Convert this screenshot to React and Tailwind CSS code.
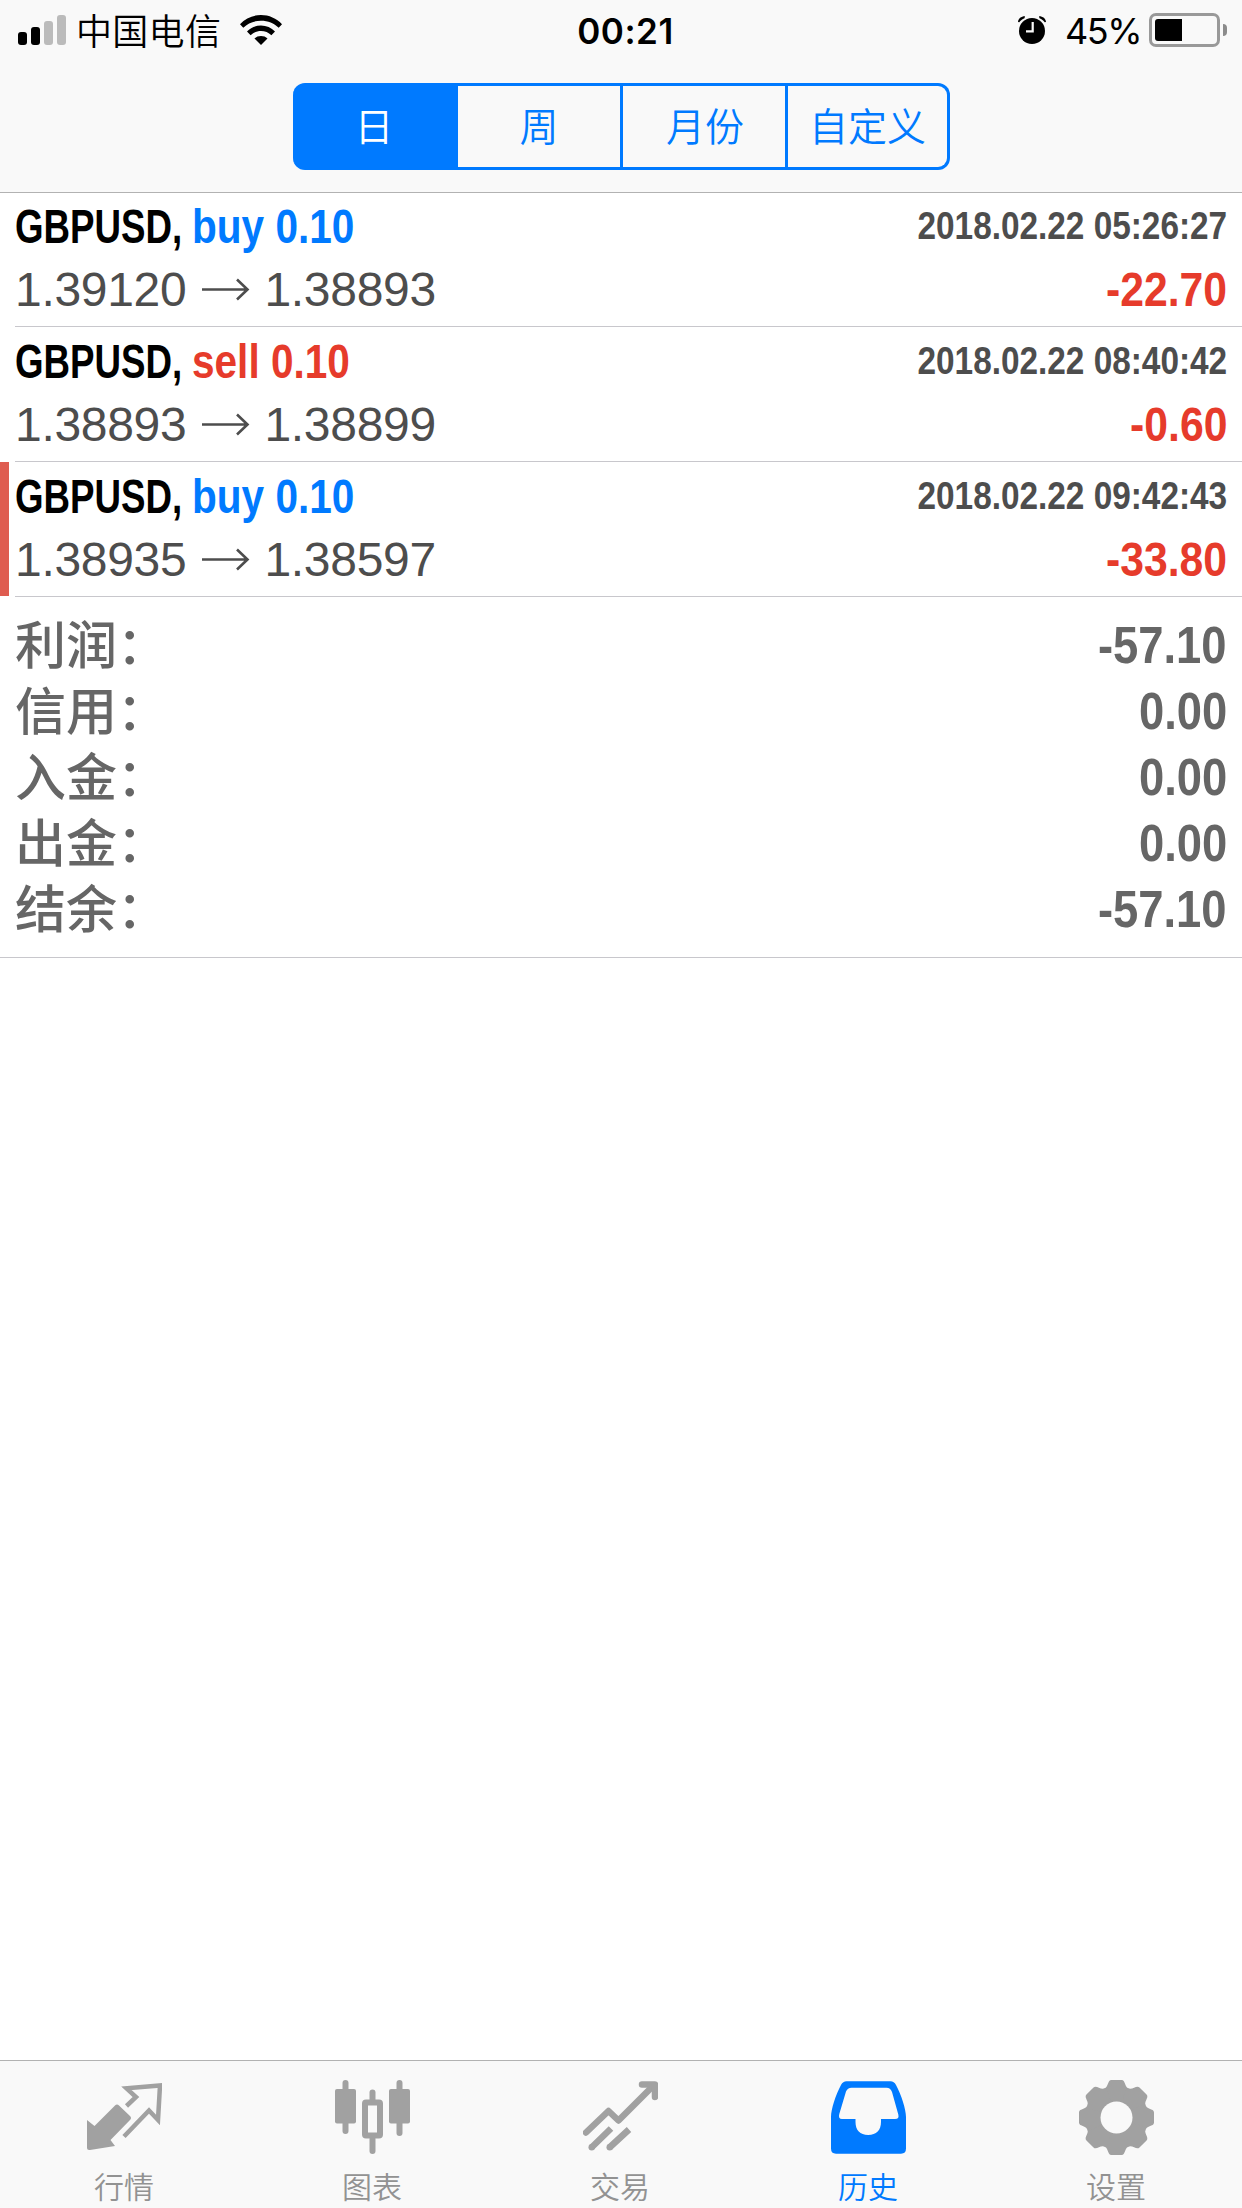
const trades = [
  { id: 1, side: 'buy', volume: '0.10', open: '1.39120', close: '1.38893', time: '2018.02.22 05:26:27', profit: '-22.70' },
  { id: 2, side: 'sell', volume: '0.10', open: '1.38893', close: '1.38899', time: '2018.02.22 08:40:42', profit: '-0.60' },
  { id: 3, side: 'buy', volume: '0.10', open: '1.38935', close: '1.38597', time: '2018.02.22 09:42:43', profit: '-33.80', marked: true },
]

const summary = [
  { label: '利润', value: '-57.10' },
  { label: '信用', value: '0.00' },
  { label: '入金', value: '0.00' },
  { label: '出金', value: '0.00' },
  { label: '结余', value: '-57.10' },
]

function SignalIcon() {
  return (
    <div className="flex items-end gap-1 h-[30px]">
      <span className="w-[9px] h-[13px] rounded-[3px] bg-black" />
      <span className="w-[9px] h-[18px] rounded-[3px] bg-black" />
      <span className="w-[9px] h-[24px] rounded-[3px] bg-[#bbbbbb]" />
      <span className="w-[9px] h-[30px] rounded-[3px] bg-[#bbbbbb]" />
    </div>
  )
}

function WifiIcon() {
  return (
    <svg width="42" height="30" viewBox="0 0 42 30">
      <path d="M0 9.2C5.5 3.3 13 0 21 0s15.500 3.300 21 9.200l-3.300 3.600C34 8.200 28 5.700 21 5.700S8 8.200 3.300 12.800z" />
      <path d="M7 16.500C10.700 12.600 15.600 10.500 21 10.500s10.300 2.100 14 6l-3.600 3.800C28.600 17.500 25 16 21 16s-7.600 1.500-10.400 4.300z" />
      <path d="M14.500 23.600C16.200 21.800 18.500 21 21 21s4.800.8 6.500 2.600L21 30z" />
    </svg>
  )
}

function AlarmIcon() {
  return (
    <svg width="28" height="28" viewBox="0 0 28 28">
      <circle cx="14" cy="15" r="13" />
      <path d="M0 6C.2 2.500 3 .2 7 .2L6.500 2.300C4.300 3.300 2.500 4.600 1.300 6.300z" />
      <path d="M28 6C27.800 2.500 25 .2 21 .2l.5 2.100c2.200 1 4 2.300 5.200 4z" />
      <path d="M14.700 6v9.300H8" fill="none" stroke="#f9f9f9" strokeWidth="2.200" />
    </svg>
  )
}

function BatteryIcon() {
  return (
    <div className="flex items-center gap-[3px]">
      <div className="w-[71px] h-[34px] rounded-[7px] border-[3px] border-[#999999] p-[3px]">
        <div className="w-[27px] h-[22px] rounded-l-[3px] bg-black" />
      </div>
      <div className="w-1 h-3 rounded-r-full bg-[#8c8c8c]" />
    </div>
  )
}

function StatusBar() {
  return (
    <div className="grid grid-cols-[1fr_auto_1fr] items-center h-[60px] px-[15px] text-[36px] leading-none">
      <div className="flex items-center pl-[3px]">
        <SignalIcon />
        <span className="ml-[10px] mr-[20px] w-[144px] whitespace-nowrap pt-[5px] font-[350] tracking-[0.3px]">中国电信</span>
        <WifiIcon />
      </div>
      <span className="pl-[9px] pt-[3px] font-['Inter'] text-[35px] font-semibold tracking-[0.5px]">00:21</span>
      <div className="flex items-center justify-end">
        <AlarmIcon />
        <span className="ml-[19px] mr-[8px] pt-[1px] font-['Inter'] tracking-[-1.5px]">45%</span>
        <BatteryIcon />
      </div>
    </div>
  )
}

function PeriodTabs() {
  const base = 'h-[87px] border-y-[3px] border-r-[3px] border-[#007aff] text-[39px] leading-none font-[350] pt-[1px]'
  return (
    <div className="ml-[293px] mt-[23px] flex w-[657px]">
      <button type="button" className={`${base} w-[165px] rounded-l-[12px] bg-[#007aff] text-white`}>日</button>
      <button type="button" className={`${base} w-[165px] text-[#007aff]`}>周</button>
      <button type="button" className={`${base} w-[165px] pl-[2px] text-[#007aff]`}>月份</button>
      <button type="button" className={`${base} w-[162px] rounded-r-[12px] text-[#007aff]`}>自定义</button>
    </div>
  )
}

function ArrowRight() {
  return (
    <svg className="ml-[16px] mr-[14px]" width="48" height="24" viewBox="0 0 48 24" fill="none" stroke="#4d4d4d" strokeWidth="2.600">
      <path d="M0 11.500H45M35 1.500l10.500 10L35 21.500" />
    </svg>
  )
}

function TradeRow({ trade }) {
  return (
    <div className="flex h-[135px]">
      <div className={trade.marked ? 'w-[9px] h-[134px] bg-[#df5c50]' : 'w-[9px]'} />
      <div className="ml-[6px] flex-1 border-b border-[#c8c7cc] pr-[15px] pt-[8px]">
        <div className="flex h-[54px] items-center justify-between font-bold leading-none">
          <div className="flex text-[48px]">
            <span className="w-[177px] origin-left scale-x-[0.765] whitespace-nowrap text-black">GBPUSD,</span>
            <span className={`origin-left scale-x-[0.845] whitespace-nowrap ${trade.side === 'buy' ? 'text-[#007aff]' : 'text-[#e63b2b]'}`}>
              {trade.side} {trade.volume}
            </span>
          </div>
          <span className="origin-right scale-x-[0.855] whitespace-nowrap pb-[3px] text-[39px] text-[#4d4d4d]">{trade.time}</span>
        </div>
        <div className="flex h-[72px] items-center justify-between text-[48px] leading-none">
          <div className="flex items-center tracking-[-0.3px] text-[#4d4d4d]">
            <span>{trade.open}</span>
            <ArrowRight />
            <span>{trade.close}</span>
          </div>
          <span className="origin-right scale-x-[0.89] font-bold text-[#e63b2b]">{trade.profit}</span>
        </div>
      </div>
    </div>
  )
}

function Summary() {
  return (
    <div className="h-[361px] border-b border-[#c8c7cc] px-[15px] pt-[15px] text-[#666666]">
      {summary.map((item) => (
        <div key={item.label} className="flex h-[66px] items-center justify-between leading-none">
          <span lang="zh-CN" className="pt-[3px] text-[51px] font-medium">{item.label}：</span>
          <span className="origin-right scale-x-[0.89] pt-[1px] text-[51px] font-bold">{item.value}</span>
        </div>
      ))}
    </div>
  )
}

function QuotesIcon() {
  return (
    <svg width="75" height="75" viewBox="0 0 75 75" fill="currentColor">
      <path d="M28 25.500q2-2 4 0L43 36q2 2 0 4L23.500 60l4.500 6-25 4q-3 .5-3-2V40l7.500 6z" />
      <path d="M39.500 26L49 17 39.500 8.300 73 5.500 71 40 62 30.500 37 56.500" fill="none" stroke="currentColor" strokeWidth="4.500" />
    </svg>
  )
}

function ChartIcon() {
  return (
    <svg width="75" height="75" viewBox="0 0 75 75" fill="currentColor">
      <rect x="7.500" y="0" width="6" height="54" rx="3" />
      <rect x="0" y="9" width="21" height="34.500" rx="2" />
      <rect x="34.500" y="9.500" width="6" height="14" rx="3" />
      <rect x="34.500" y="56" width="6" height="18" rx="3" />
      <rect x="30" y="22.500" width="15" height="33" rx="1" fill="none" stroke="currentColor" strokeWidth="6" />
      <rect x="61.500" y="0" width="6" height="56" rx="3" />
      <rect x="54" y="9" width="21" height="34.500" rx="2" />
    </svg>
  )
}

function TradeIcon() {
  return (
    <svg width="75" height="75" viewBox="0 0 75 75" fill="none" stroke="currentColor" strokeWidth="6.500" strokeLinejoin="round">
      <path d="M3 52.500L25.500 31l10 9.500L70 6" strokeLinecap="round" />
      <path d="M59 4.500H72V17" strokeLinecap="round" />
      <path d="M65 4L72 11V4z" fill="currentColor" strokeWidth="2" />
      <path d="M8.500 67.500L28 48.500M26.500 67.500L46 49.500" />
      <circle cx="8.700" cy="67.300" r="3.200" fill="currentColor" stroke="none" />
      <circle cx="26.700" cy="67.300" r="3.200" fill="currentColor" stroke="none" />
    </svg>
  )
}

function HistoryIcon() {
  return (
    <svg width="75" height="75" viewBox="0 0 75 75" fill="currentColor" fillRule="evenodd">
      <path d="M15.500 1.300H59.500Q63 1.300 65 5C70 14 75 29 75 37V68.500Q75 73.700 70 73.700H5Q0 73.700 0 68.500V37C0 29 5 14 10 5Q12 1.300 15.500 1.300ZM20.500 7.700Q16.500 7.700 15 11.500L8.300 34Q7 39 11 39H24.500V42C24.500 50 29 55 37.200 55S50 50 50 42V39H64Q68.500 39 67.300 34.500L61 12Q59.500 7.700 55.500 7.700Z" />
    </svg>
  )
}

function SettingsIcon() {
  return (
    <svg width="75" height="75" viewBox="-37.500 -37.500 75 75" fill="currentColor">
      <circle r="31" />
      {[0, 45, 90, 135, 180, 225, 270, 315].map((deg) => (
        <path key={deg} transform={`rotate(${deg})`} d="M-14 -28.500C-7.500 -29 -9.500 -37.500 -5 -37.500H5C9.500 -37.500 7.500 -29 14 -28.500L0 0Z" />
      ))}
      <circle r="16" fill="#f9f9f9" />
    </svg>
  )
}

const tabs = [
  { label: '行情', Icon: QuotesIcon },
  { label: '图表', Icon: ChartIcon },
  { label: '交易', Icon: TradeIcon },
  { label: '历史', Icon: HistoryIcon, active: true },
  { label: '设置', Icon: SettingsIcon },
]

function TabBar() {
  return (
    <nav className="grid h-[148px] grid-cols-5 border-t border-[#b2b2b2] bg-[#f9f9f9] pr-[2px]">
      {tabs.map(({ label, Icon, active }) => (
        <button
          key={label}
          type="button"
          className={`flex flex-col items-center pt-[19px] ${active ? 'text-[#007aff]' : 'text-[#a1a1a1]'}`}
        >
          <Icon />
          <span className={`mt-[17px] text-[30px] leading-[32px] font-[350] ${active ? '' : 'text-[#929292]'}`}>{label}</span>
        </button>
      ))}
    </nav>
  )
}

export default function App() {
  return (
    <div className="flex h-[2208px] w-[1242px] flex-col overflow-hidden bg-white font-['Liberation_Sans','Noto_Sans_CJK_SC',sans-serif] text-black">
      <header className="relative z-10 h-[192px] bg-[#f9f9f9] shadow-[0_1px_0_#b2b2b2]">
        <StatusBar />
        <PeriodTabs />
      </header>
      <main className="flex-1">
        {trades.map((trade) => (
          <TradeRow key={trade.id} trade={trade} />
        ))}
        <Summary />
      </main>
      <TabBar />
    </div>
  )
}
